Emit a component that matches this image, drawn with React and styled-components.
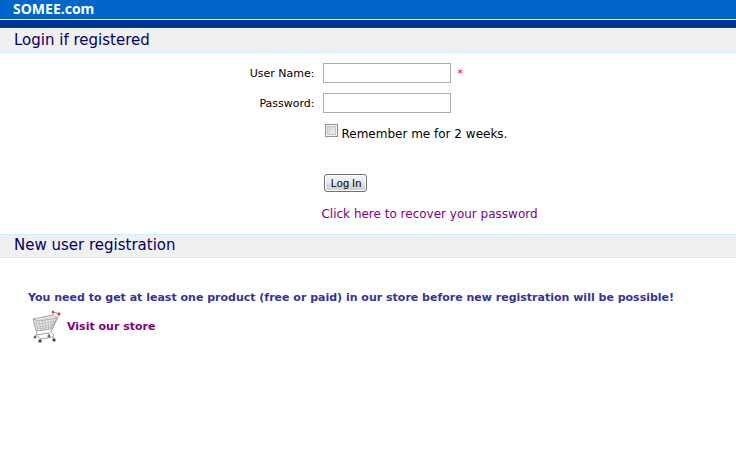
import React from "react";
import styled, { createGlobalStyle } from "styled-components";


const GlobalStyle = createGlobalStyle`
    * {
        box-sizing: border-box;
    }

    body {
        margin: 0;
        background: #fff;
        color: #000;
        font-family: Verdana, "DejaVu Sans", sans-serif;
        font-size: 11px;
        line-height: 22px;
    }
`

const Header = styled.header`
    height: 20px;
    padding: 0 13px;
    background: #0066cc;
    border-bottom: 1px solid #fff;
    color: #fff;
    font-family: "Open Sans", sans-serif;
    font-size: 14px;
    font-weight: 700;
    line-height: 18px;
`

const HeaderStripe = styled.div`
    height: 8px;
    margin-bottom: 1px;
    background: #003399;
`

const SectionTitle = styled.h1`
    height: 24px;
    margin: 0;
    padding: 0 14px;
    background: #f0f0f0;
    border-top: 1px solid #cceeff;
    border-bottom: 1px solid #cceeff;
    color: #000066;
    font-size: 15px;
    font-weight: 400;
    line-height: 20px;
`

const LoginForm = styled.form`
    display: grid;
    grid-template-columns: 43% 1fr;
    column-gap: 5px;
    row-gap: 8px;
    padding: 10px 0 9px;
`

const FieldLabel = styled.label`
    padding-right: 2px;
    text-align: right;
`

const Field = styled.div`
    display: flex;
    align-items: flex-start;
    gap: 6px;
    padding-left: 2px;
`

const TextInput = styled.input`
    width: 128px;
    height: 20px;
    padding: 1px 3px;
    background: #fff;
    border: 1px solid #abadb3;
    border-radius: 0;
    font: inherit;
    outline: none;
`

const Required = styled.span`
    color: #ff0000;
`

const FormRow = styled.div`
    grid-column: 2;
    display: flex;
    align-items: flex-start;
    gap: 3px;
    height: 22px;
    padding-left: ${props => props.$indent || 0}px;
    margin-top: ${props => props.$space || 0}px;
    font-size: 12px;
`

const CheckBox = styled.input`
    appearance: none;
    width: 13px;
    height: 13px;
    margin: 1px 0 0;
    background: linear-gradient(135deg, #cbcbcb, #f6f6f6);
    border: 1px solid #8e8f8f;
    box-shadow: inset 0 0 0 1px #f4f4f4, inset 0 0 0 2px #c4c4c4;
`

const LoginButton = styled.button`
    width: 43px;
    height: 18px;
    margin: 1px 0 0;
    padding: 0;
    background: linear-gradient(#f2f2f2, #ebebeb 50%, #dddddd 50%, #cfcfcf);
    border: 1px solid #707070;
    border-radius: 3px;
    box-shadow: inset 0 0 0 1px #fcfcfc;
    color: #000;
    font-family: "Liberation Sans", Arial, sans-serif;
    font-size: 11px;
    line-height: 16px;
`

const Link = styled.a`
    color: #800080;
    text-decoration: none;
`

const Registration = styled.section`
    padding: 29px 28px;
    font-weight: 700;
`

const Notice = styled.p`
    margin: 0;
    color: #333399;
`

const StoreLink = styled(Link)`
    display: inline-flex;
    align-items: center;
    gap: 3px;
    padding-left: 3px;
`

const CartIcon = () => {
    return (
        <svg width="33" height="36" viewBox="0 1 33 36" fill="none" aria-hidden="true">
            <path d="M2 11 L22 7 L26 10 L20 21 L5 23 Z" fill="#ececec" stroke="#a8a8a8" />
            <path d="M2 11 L8 13 L26 10" stroke="#a0a0a0" strokeWidth=".8" />
            <path d="M5 12 L7 23 M8 13 L10 23 M11 12.5 L12.5 22.5 M14 12 L15 22 M17 11.5 L17.5 22 M20 11 L20 21 M23 10.5 L20.5 20" stroke="#aaa" strokeWidth=".7" />
            <path d="M3 15 L8 16 L24 13.5 M4 18 L8 19 L22.5 16.5 M5 21 L21 19" stroke="#b4b4b4" strokeWidth=".7" />
            <path d="M6 10.5 L12 12 M11 9.5 L17 11 M16 8.5 L22 10" stroke="#c4c4c4" strokeWidth=".6" />
            <path d="M28 7 L20 24 L23 27 L22 29 L10 31 L5 27 L19 25" stroke="#a0a0a0" />
            <path d="M6 23 L5 27 M22 29 L23 31 M18 25 L18 27" stroke="#b0b0b0" />
            <path d="M22 7 L22 4 M28 7 L29 6" stroke="#aaa" />
            <path d="M22 4 L29 6" stroke="#c98080" strokeWidth="1.3" />
            <circle cx="22" cy="4" r="1.2" fill="#c33" />
            <circle cx="28" cy="6" r="1.4" fill="#b33" />
            <circle cx="4" cy="29" r="1.5" fill="#666" />
            <circle cx="18" cy="28" r="1.5" fill="#666" />
            <circle cx="9" cy="33" r="1.7" fill="#4a4a4a" />
            <circle cx="23" cy="32" r="1.7" fill="#4a4a4a" />
        </svg>
    )
}

const App = () => {
    return (
        <>
            <GlobalStyle />
            <Header>SOMEE.com</Header>
            <HeaderStripe />

            <main>
                <SectionTitle>Login if registered</SectionTitle>
                <LoginForm onSubmit={e => e.preventDefault()}>
                    <FieldLabel htmlFor="username">User Name:</FieldLabel>
                    <Field>
                        <TextInput id="username" type="text" required />
                        <Required>*</Required>
                    </Field>

                    <FieldLabel htmlFor="password">Password:</FieldLabel>
                    <Field>
                        <TextInput id="password" type="password" />
                    </Field>

                    <FormRow $indent={4}>
                        <CheckBox id="remember" type="checkbox" />
                        <label htmlFor="remember">Remember me for 2 weeks.</label>
                    </FormRow>

                    <FormRow $indent={3} $space={20}>
                        <LoginButton type="submit">Log In</LoginButton>
                    </FormRow>

                    <FormRow>
                        <Link href="#">Click here to recover your password</Link>
                    </FormRow>
                </LoginForm>

                <SectionTitle as="h2">New user registration</SectionTitle>
                <Registration>
                    <Notice>You need to get at least one product (free or paid) in our store before new registration will be possible!</Notice>
                    <StoreLink href="#">
                        <CartIcon />
                        Visit our store
                    </StoreLink>
                </Registration>
            </main>
        </>
    )
}

export default App;
